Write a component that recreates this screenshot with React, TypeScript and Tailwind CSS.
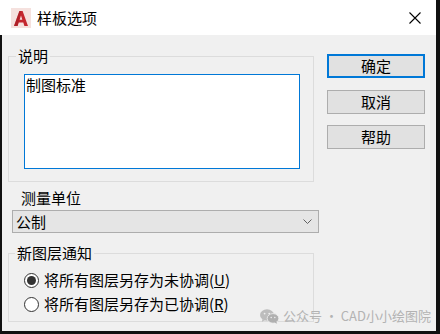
import React from 'react';

const RadioDot = ({ checked }: { checked?: boolean }) => (
  <span className="w-[15px] h-[15px] rounded-full border border-[#333] bg-white flex items-center justify-center shrink-0">
    {checked && <span className="w-[9px] h-[9px] rounded-full bg-[#333]" />}
  </span>
);

const CadLogo = () => (
  <svg width="20" height="20" viewBox="0 0 20 20">
    <rect width="20" height="20" fill="#f5e1de" />
    <path
      d="M3 18 L8.4 3 L11.6 3 L17 18 L13.4 18 L12.3 14.6 L7.7 14.6 L6.6 18 Z M8.7 11.8 L11.3 11.8 L10 7.6 Z"
      fill="#c4262e"
      fillRule="evenodd"
    />
    <path d="M3 18 L8.4 3 L10 3 L6.6 18 Z" fill="#9e1b22" opacity="0.55" />
  </svg>
);

const WeChatIcon = () => (
  <svg width="19" height="15" viewBox="0 0 19 15">
    <ellipse cx="7" cy="6" rx="7" ry="5.8" fill="#bdbdbd" />
    <path d="M2.5 10 L1.8 13 L5 11 Z" fill="#bdbdbd" />
    <circle cx="4.6" cy="4.6" r="0.9" fill="#f0f0f0" />
    <circle cx="9.2" cy="4.6" r="0.9" fill="#f0f0f0" />
    <ellipse cx="13" cy="9.4" rx="5.8" ry="4.8" fill="#b0b0b0" stroke="#f0f0f0" strokeWidth="0.8" />
    <path d="M16.3 12.5 L17.2 14.8 L14.4 13.4 Z" fill="#b0b0b0" />
    <circle cx="11.2" cy="8.4" r="0.75" fill="#f0f0f0" />
    <circle cx="14.8" cy="8.4" r="0.75" fill="#f0f0f0" />
  </svg>
);

export default function App() {
  return (
    <div className="w-[440px] h-[334px] bg-[#111] flex flex-col font-['Noto_Sans_CJK_SC',sans-serif] text-black overflow-hidden">
      {/* Title bar */}
      <div className="w-[436px] h-[35px] bg-white flex items-center shrink-0">
        <div className="ml-[11px]">
          <CadLogo />
        </div>
        <span className="ml-[6px] text-[15px] leading-[20px]">样板选项</span>
        <svg className="ml-auto mr-[15px]" width="12" height="12" viewBox="0 0 12 12">
          <path d="M0.5 0.5 L11.5 11.5 M11.5 0.5 L0.5 11.5" stroke="#000" strokeWidth="1.1" />
        </svg>
      </div>

      {/* Body */}
      <div className="relative ml-[2px] w-[434px] h-[296px] bg-[#f0f0f0] flex pl-[6px] pt-[11px] text-[15px]">
        {/* Left column */}
        <div className="w-[306px] flex flex-col">
          <fieldset className="w-[306px] border border-[#dcdcdc] pb-[12px]">
            <legend className="ml-[7px] px-[2px] leading-[20px]">说明</legend>
            <div className="ml-[15px] mt-[8px] w-[276px] h-[95px] border border-[#0078d7] bg-white pl-[1px] leading-[20px]">
              制图标准
            </div>
          </fieldset>

          <div className="ml-[13px] mt-[6px] leading-[20px]">测量单位</div>
          <div className="ml-[4px] mt-[2px] w-[307px] h-[23px] shrink-0 border border-[#adadad] bg-[#e5e5e5] flex items-center pl-[3px] pr-[6px] leading-[20px]">
            <span>公制</span>
            <svg className="ml-auto" width="9" height="5" viewBox="0 0 9 5">
              <path d="M0.5 0.5 L4.5 4.5 L8.5 0.5" stroke="#606060" strokeWidth="1" fill="none" />
            </svg>
          </div>

          <fieldset className="mt-[10px] w-[306px] border border-[#dcdcdc] pt-[5px] pb-[5px]">
            <legend className="ml-[6px] px-[2px] leading-[20px]">新图层通知</legend>
            <div className="flex items-center h-[24px] ml-[15px] gap-[5px]">
              <RadioDot checked />
              <span className="leading-[20px]">
                将所有图层另存为未协调(<u>U</u>)
              </span>
            </div>
            <div className="flex items-center h-[24px] ml-[15px] gap-[5px]">
              <RadioDot />
              <span className="leading-[20px]">
                将所有图层另存为已协调(<u>R</u>)
              </span>
            </div>
          </fieldset>
        </div>

        {/* Buttons */}
        <div className="ml-[13px] mt-[8px] w-[98px] flex flex-col">
          <button className="h-[24px] border-2 border-[#0078d7] bg-[#e1e1e1] leading-[20px]">确定</button>
          <button className="mt-[12px] h-[24px] border border-[#adadad] bg-[#e1e1e1] leading-[20px]">取消</button>
          <button className="mt-[11px] h-[24px] border border-[#adadad] bg-[#e1e1e1] leading-[20px]">帮助</button>
        </div>

        {/* Watermark */}
        <div className="absolute left-[258px] top-[272px] flex items-center gap-[4px] text-[13px] leading-[18px] text-[#b3b3b3]">
          <WeChatIcon />
          <span>公众号 · CAD小小绘图院</span>
        </div>
      </div>
    </div>
  );
}
